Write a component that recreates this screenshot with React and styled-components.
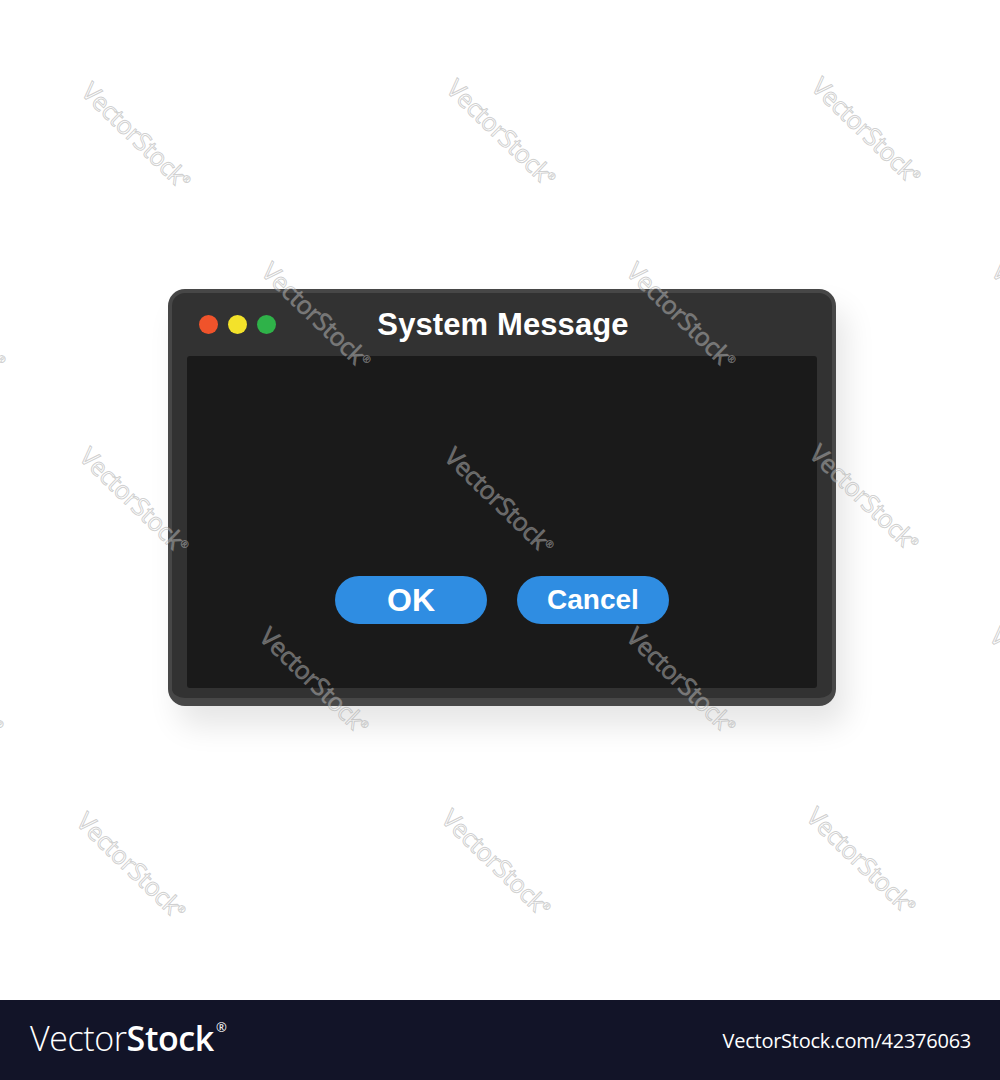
import React from "react"
import styled, { createGlobalStyle } from "styled-components"

const GlobalStyle = createGlobalStyle`
  html, body {
    margin: 0;
    padding: 0;
    background: #ffffff;
  }
  body {
    font-family: "Liberation Sans", Arial, sans-serif;
  }
`

const Page = styled.div`
  position: relative;
  width: 1000px;
  height: 1080px;
  overflow: hidden;
  background: #ffffff;
`

const Stage = styled.main`
  height: 1000px;
  box-sizing: border-box;
  display: flex;
  justify-content: center;
  align-items: flex-start;
  padding: 289px 0 0 4px;
`

const Window = styled.section`
  width: 668px;
  height: 417px;
  box-sizing: border-box;
  display: flex;
  flex-direction: column;
  background: #323232;
  border: 4px solid #474747;
  border-bottom-width: 8px;
  border-radius: 17px;
  padding: 0 15px 10px;
  box-shadow: 10px 20px 30px rgba(0, 0, 0, 0.1);
`

const TitleBar = styled.header`
  height: 63px;
  flex: none;
  display: grid;
  grid-template-columns: 1fr auto 1fr;
  align-items: center;
  padding: 0 12px;
`

const Lights = styled.div`
  display: flex;
  gap: 10px;
`

const Light = styled.span`
  width: 19px;
  height: 19px;
  border-radius: 50%;
  background: ${p => p.color};
`

const Title = styled.h1`
  margin: 0;
  color: #ffffff;
  font-family: "Liberation Sans", Arial, sans-serif;
  font-weight: 700;
  font-size: 31px;
  letter-spacing: 0.1px;
  transform: translateX(1px);
`

const Content = styled.div`
  flex: 1;
  background: #1a1a1a;
  border-radius: 3px;
  display: flex;
  align-items: flex-end;
  justify-content: center;
  gap: 30px;
  padding-bottom: 64px;
`

const Button = styled.button`
  width: 152px;
  height: 48px;
  border: none;
  border-radius: 24px;
  background: #2f8de2;
  color: #ffffff;
  font-family: "Liberation Sans", Arial, sans-serif;
  font-weight: 700;
  font-size: ${p => p.size}px;
  line-height: 48px;
  padding: 0;
  cursor: pointer;
`

const Footer = styled.footer`
  height: 80px;
  box-sizing: border-box;
  background: #121428;
  display: flex;
  align-items: center;
  justify-content: space-between;
  padding: 0 29px 0 30px;
  color: #ffffff;
`

const Logo = styled.div`
  font-family: "Open Sans", sans-serif;
  font-size: 34px;
  letter-spacing: -0.4px;
  line-height: 1;
  display: flex;
  align-items: flex-start;
  margin-top: -4px;
`

const LogoThin = styled.span`
  font-weight: 300;
`

const LogoBold = styled.span`
  font-weight: 600;
`

const Reg = styled.sup`
  font-size: 13px;
  font-weight: 400;
  margin-left: 2px;
  vertical-align: top;
`

const Ref = styled.span`
  font-family: "Open Sans", sans-serif;
  font-size: 20px;
  letter-spacing: -0.25px;
`

const Watermark = styled.span`
  position: absolute;
  left: ${p => p.x}px;
  top: ${p => p.y}px;
  transform: translate(-50%, -50%) rotate(44deg);
  font-family: "Open Sans", sans-serif;
  font-size: 25px;
  letter-spacing: -0.5px;
  white-space: nowrap;
  color: rgba(255, 255, 255, 0.32);
  -webkit-text-stroke: 1px rgba(150, 150, 150, 0.45);
  pointer-events: none;
  sup {
    font-size: 10px;
    -webkit-text-stroke: 0.5px rgba(150, 150, 150, 0.45);
  }
`

const marks = [
  [137, 135], [502, 132], [867, 130],
  [-48, 315], [317, 315], [682, 315], [1047, 315],
  [135, 500], [500, 500], [865, 497],
  [-50, 680], [315, 680], [682, 680], [1045, 680],
  [132, 865], [497, 862], [862, 860],
]

export default function App() {
  return (
    <Page>
      <GlobalStyle />
      <Stage>
        <Window>
          <TitleBar>
            <Lights>
              <Light color="#f0532b" />
              <Light color="#f3e22a" />
              <Light color="#2fb249" />
            </Lights>
            <Title>System Message</Title>
            <span />
          </TitleBar>
          <Content>
            <Button size={32}>OK</Button>
            <Button size={28}>Cancel</Button>
          </Content>
        </Window>
      </Stage>
      <Footer>
        <Logo>
          <LogoThin>Vector</LogoThin>
          <LogoBold>Stock</LogoBold>
          <Reg>®</Reg>
        </Logo>
        <Ref>VectorStock.com/42376063</Ref>
      </Footer>
      {marks.map(([x, y]) => (
        <Watermark key={`${x}-${y}`} x={x} y={y}>
          VectorStock<sup>®</sup>
        </Watermark>
      ))}
    </Page>
  )
}
